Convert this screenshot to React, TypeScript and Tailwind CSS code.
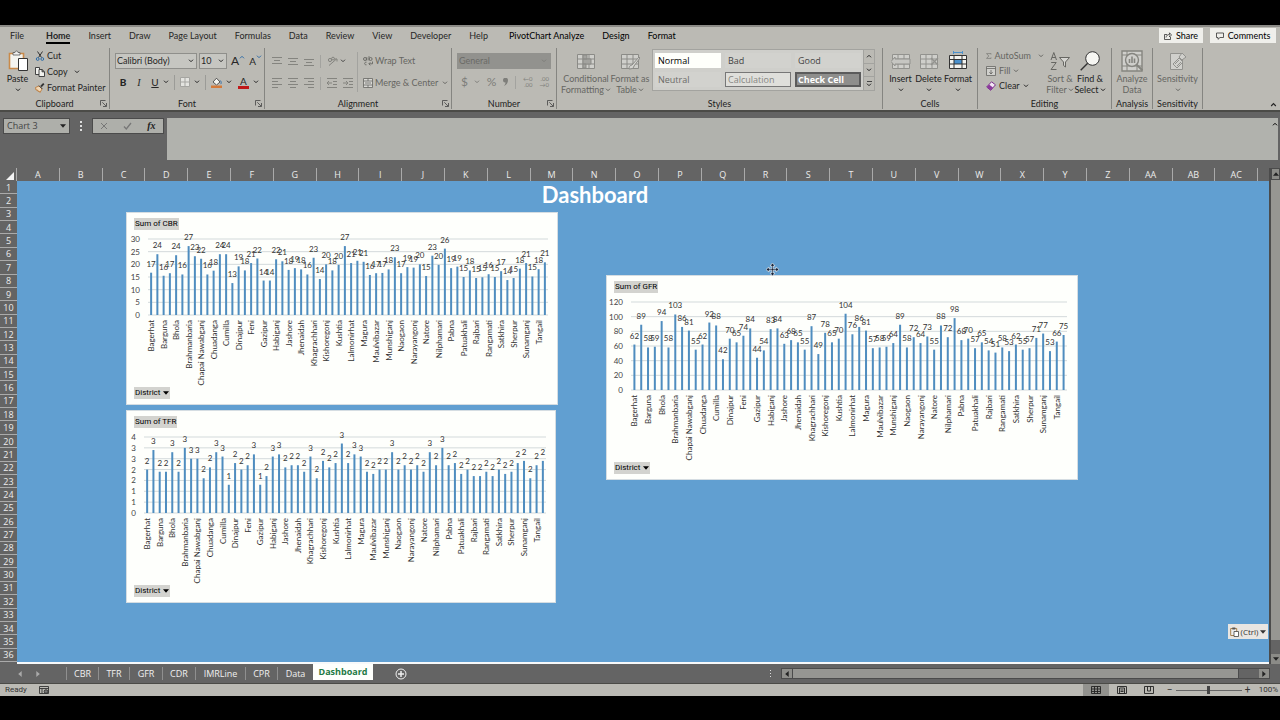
import { ReactNode } from 'react';

const menuTabs = ['Home', 'Insert', 'Draw', 'Page Layout', 'Formulas', 'Data', 'Review', 'View', 'Developer', 'Help'];
const chartTabs = ['PivotChart Analyze', 'Design', 'Format'];

const columns = [
  'A', 'B', 'C', 'D', 'E', 'F', 'G', 'H', 'I', 'J', 'K', 'L', 'M', 'N', 'O', 'P', 'Q', 'R', 'S', 'T',
  'U', 'V', 'W', 'X', 'Y', 'Z', 'AA', 'AB', 'AC',
];
const rows = Array.from({ length: 36 }, (_, i) => i + 1);

const sheets = [
  { name: 'CBR', width: 'w-8' },
  { name: 'TFR', width: 'w-[31px]' },
  { name: 'GFR', width: 'w-[33px]' },
  { name: 'CDR', width: 'w-[33px]' },
  { name: 'IMRLine', width: 'w-[50px]' },
  { name: 'CPR', width: 'w-8' },
  { name: 'Data', width: 'w-9' },
];

// The category axis only has room for every second district
const districts = [
  'Bagerhat', 'Barguna', 'Bhola', 'Brahmanbaria', 'Chapai Nawabganj', 'Chuadanga', 'Cumilla', 'Dinajpur',
  'Feni', 'Gazipur', 'Habiganj', 'Jashore', 'Jhenaidah', 'Khagrachhari', 'Kishoregonj', 'Kushtia',
  'Lalmonirhat', 'Magura', 'Maulvibazar', 'Munshiganj', 'Naogaon', 'Narayangonj', 'Natore', 'Nilphamari',
  'Pabna', 'Patuakhali', 'Rajbari', 'Rangamati', 'Satkhira', 'Sherpur', 'Sunamganj', 'Tangail',
];

const cbr = [
  16.7, 24, 15.5, 16.5, 23.6, 16, 27.2, 23.2, 22.2, 16, 17.5, 24, 24, 12.6, 19.2, 17.6,
  20.5, 22.3, 13.6, 13.6, 22, 21.2, 17.8, 18.5, 18, 16, 22.6, 14.2, 20, 17.6, 19.8, 27.2,
  20.5, 21.4, 21, 15.8, 16.5, 16.6, 18, 22.8, 16.5, 18.9, 18.7, 20, 15.4, 23.4, 19.8, 26.2,
  18.5, 19.1, 15, 17.6, 14.6, 14.9, 16.1, 15, 17.3, 13.8, 14.6, 18.3, 20.5, 15.2, 18.1, 20.8,
];
const tfr = [
  2, 2.9, 1.9, 1.9, 2.8, 1.9, 3, 2.5, 2.5, 1.6, 2.1, 2.8, 2.6, 1.3, 2.3, 2,
  2.2, 2.7, 1.3, 1.7, 2.6, 2.7, 2.1, 2.2, 2.2, 1.9, 2.6, 1.6, 2.4, 2.1, 2.3, 3.2,
  2.3, 2.7, 2.6, 1.9, 1.8, 2, 2, 2.8, 2, 2.2, 2, 2.2, 1.9, 2.8, 2.2, 3,
  2.2, 2.3, 1.8, 2, 1.7, 1.7, 1.9, 1.7, 2, 1.8, 1.9, 2.3, 2.4, 1.6, 2.2, 2.4,
];
const gfr = [
  62, 89, 58, 59, 94, 58, 103, 86, 81, 55, 62, 92, 88, 42, 70, 65,
  74, 84, 44, 54, 83, 84, 63, 68, 65, 55, 87, 49, 78, 65, 70, 104,
  76, 86, 81, 57, 58, 59, 64, 89, 58, 72, 64, 73, 55, 88, 72, 98,
  68, 70, 57, 65, 54, 51, 58, 53, 62, 55, 57, 71, 77, 53, 66, 75,
];

function Chevron({ className = '' }: { className?: string }) {
  return (
    <svg viewBox="0 0 6 4" className={`h-1 w-1.5 shrink-0 ${className}`} fill="none" stroke="currentColor">
      <path d="M1 .7 3 2.7 5 .7" />
    </svg>
  );
}

function Triangle({ className = '' }: { className?: string }) {
  return (
    <svg viewBox="0 0 6 4" className={`h-1 w-1.5 shrink-0 ${className}`} fill="currentColor">
      <path d="M0 .3h6L3 3.8z" />
    </svg>
  );
}

function Launcher() {
  return (
    <button aria-label="More options" className="absolute right-0.5 bottom-0.5 text-[#444]">
      <svg viewBox="0 0 7 7" className="size-[7px]" fill="none" stroke="currentColor" strokeWidth=".8">
        <path d="M.5 5.5v-5h5M2.3 2.3l3.8 3.8M6.5 3v3.5H3" />
      </svg>
    </button>
  );
}

function Group({ label, width, launcher, children }: { label: string; width: string; launcher?: boolean; children: ReactNode }) {
  return (
    <section className={`relative flex shrink-0 flex-col border-r border-[#858581] ${width}`}>
      <div className="flex h-[51px]">{children}</div>
      <div className="text-center text-[9px] leading-[10px] text-[#222]">{label}</div>
      {launcher && <Launcher />}
    </section>
  );
}

function BigButton({ icon, lines, width, disabled, chevron = 'below' }: {
  icon: ReactNode;
  lines: string[];
  width: string;
  disabled?: boolean;
  chevron?: 'below' | 'inline' | 'none';
}) {
  return (
    <button disabled={disabled} className={`flex shrink-0 flex-col items-center text-[9px] leading-[11px] whitespace-nowrap ${width} ${disabled ? 'text-[#666662]' : 'text-[#222]'}`}>
      <span className="flex h-[25px] items-center justify-center">{icon}</span>
      {lines.map((line, i) => (
        <span key={line} className="flex items-center gap-px">
          {line}
          {chevron === 'inline' && i === lines.length - 1 && <Chevron />}
        </span>
      ))}
      {chevron === 'below' && <Chevron className="mt-1" />}
    </button>
  );
}

function Lines({ d, label }: { d: string; label: string }) {
  return (
    <button disabled aria-label={label} className="text-[#84847f]">
      <svg viewBox="0 0 10 10" className="size-[10px]" fill="none" stroke="currentColor"><path d={d} /></svg>
    </button>
  );
}

function GridIcon({ className = 'text-[#8b8b87]', children }: { className?: string; children?: ReactNode }) {
  return (
    <svg viewBox="0 0 20 20" className={`size-5 ${className}`} fill="none" stroke="currentColor">
      <path d="M1.5 3.5h17v14h-17z" fill="#cfcfcb" />
      <path d="M1.5 8h17M1.5 13h17M7 3.5v14M13 3.5v14" />
      {children}
    </svg>
  );
}

function Ribbon() {
  return (
    <header className="shrink-0 border-t-2 border-[#8b8a86] bg-[#bbbab4] font-['Lato',sans-serif] text-[#262626]">
      <nav className="flex h-[21px] items-start pt-px pr-1 pl-[10px] text-[9px]">
        <a href="#" className="mr-[22px] leading-4">File</a>
        <div className="flex gap-[18px]">
          {menuTabs.map((tab) => (
            <a
              key={tab}
              href="#"
              className={`h-4 leading-4 whitespace-nowrap ${tab === 'Home' ? 'border-b-2 border-black font-bold' : ''}`}
            >
              {tab}
            </a>
          ))}
        </div>
        <div className="ml-[21px] flex flex-1 gap-[18px] text-black">
          {chartTabs.map((tab) => (
            <a key={tab} href="#" className="leading-4 whitespace-nowrap">{tab}</a>
          ))}
        </div>
        <div className="flex gap-[7px] text-black">
          <button className="flex h-[15px] w-11 items-center justify-center gap-1 bg-[#efefeb]">
            <svg viewBox="0 0 8 8" className="size-2" fill="none" stroke="#333" strokeWidth=".8">
              <path d="M3 2.5H.5v5h6V5M2 5.5c.3-2 1.5-3 3.5-3V.8l2 2.2-2 2V3.6" />
            </svg>
            Share
          </button>
          <button className="flex h-[15px] w-[66px] items-center justify-center gap-1 bg-[#efefeb]">
            <svg viewBox="0 0 8 8" className="size-2" fill="none" stroke="#333" strokeWidth=".8">
              <path d="M.5 1h7v4.5H4L2 7.3V5.5H.5z" />
            </svg>
            Comments
          </button>
        </div>
      </nav>

      <div className="flex h-[62px] pb-px">
        <Group label="Clipboard" width="w-[110px]" launcher>
          <BigButton
            width="w-[35px]"
            lines={['Paste']}
            icon={
              <svg viewBox="0 0 20 22" className="h-[22px] w-5">
                <path d="M1.5 3.5h14v15h-14z" fill="#f4f4f0" stroke="#c98a4a" strokeWidth="1.6" />
                <path d="M5 5V2.5h2C7 .5 10 .5 10 2.5h2V5z" fill="#eee" stroke="#555" strokeWidth=".8" />
                <path d="M10.5 8.5h9v12h-9z" fill="#fff" stroke="#333" />
              </svg>
            }
          />
          <div className="flex flex-col text-[9px] leading-4">
            <button className="flex h-4 items-center gap-0.5">
              <svg viewBox="0 0 10 10" className="size-[10px]" fill="none">
                <path d="M2.5.5l4 6M7.5.5l-4 6" stroke="#333" />
                <circle cx="2.7" cy="8" r="1.4" stroke="#2f6da8" />
                <circle cx="7.3" cy="8" r="1.4" stroke="#2f6da8" />
              </svg>
              Cut
            </button>
            <button className="flex h-4 items-center gap-0.5">
              <svg viewBox="0 0 10 10" className="size-[10px]" fill="#f2f2ee" stroke="#333" strokeWidth=".9">
                <path d="M.5.5h4v7h-4z" />
                <path d="M4 2.5h3l2.5 2.3v4.7H4zM7 2.5v2.3h2.5" />
              </svg>
              Copy <Chevron className="ml-1" />
            </button>
            <button className="flex h-4 items-center gap-0.5 whitespace-nowrap">
              <svg viewBox="0 0 10 10" className="size-[10px]">
                <path d="M6 3.5 8.8.7" stroke="#333" strokeWidth="1.8" />
                <path d="M.5 4.5 4 3l3 3-2 3.5-1-1.5-1 .5-.4-1.5H1z" fill="#f1d7b5" stroke="#b9722f" strokeWidth=".8" />
                <path d="m4 2.6 3.3 3.3" stroke="#333" />
              </svg>
              Format Painter
            </button>
          </div>
        </Group>

        <Group label="Font" width="w-[155px]" launcher>
          <div className="flex flex-col gap-[5px] pt-[5px] pl-[5px]">
            <div className="flex items-center gap-0.5">
              <span className="relative">
                <select aria-label="Font" className="block h-4 w-[82px] appearance-none border border-[#8f8f8b] bg-[#c6c6c1] pl-px text-[9px]">
                  <option>Calibri (Body)</option>
                </select>
                <Chevron className="absolute top-1.5 right-[3px]" />
              </span>
              <span className="relative">
                <select aria-label="Font size" className="block h-4 w-7 appearance-none border border-[#8f8f8b] bg-[#c6c6c1] pl-px text-[9px]">
                  <option>10</option>
                </select>
                <Chevron className="absolute top-1.5 right-[3px]" />
              </span>
              <button aria-label="Increase font size" className="ml-0.5 flex text-xs leading-4">
                A<Chevron className="mt-0.5 rotate-180 text-[#2f6da8]" />
              </button>
              <button aria-label="Decrease font size" className="ml-0.5 flex text-[10px] leading-4">
                A<Chevron className="mt-0.5 text-[#2f6da8]" />
              </button>
            </div>
            <div className="flex h-4 items-center text-[10px]">
              <button className="w-4 font-black">B</button>
              <button className="w-4 font-['Liberation_Serif',serif] italic">I</button>
              <button className="w-4 underline">U</button>
              <Chevron />
              <span className="mx-[5px] h-[15px] border-l border-[#9b9b97]" />
              <button aria-label="Borders" className="flex items-center gap-1">
                <svg viewBox="0 0 10 10" className="size-[10px]" fill="#e4e4e0" stroke="#a5a5a1"><path d="M.5.5h9v9h-9zM5 .5v9M.5 5h9" /></svg>
                <Chevron />
              </button>
              <span className="mx-[5px] h-[15px] border-l border-[#9b9b97]" />
              <button aria-label="Fill colour" className="flex items-center gap-1">
                <svg viewBox="0 0 11 11" className="size-[11px]">
                  <path d="M2 5 5.5 1.2 9 5 5.5 8z" fill="#f4f4f0" stroke="#333" strokeWidth=".8" />
                  <path d="M9.3 3.5c1 1.2 1.2 2.6.4 3.6" stroke="#2f6da8" fill="none" />
                  <path d="M0 8.5h11V11H0z" fill="#d47a3a" />
                </svg>
                <Chevron />
              </button>
              <button aria-label="Font colour" className="ml-1.5 flex items-center gap-1">
                <span className="w-[11px] border-b-[3px] border-[#c01818] text-center text-[10px] leading-[10px]">A</span>
                <Chevron />
              </button>
            </div>
          </div>
        </Group>

        <Group label="Alignment" width="w-[187px]" launcher>
          <div className="flex flex-col pt-[5px] pl-[7px] text-[#84847f]">
            <div className="flex h-4 items-center gap-1.5">
              <Lines label="Top align" d="M0 1.5h10M2 4.5h6M0 7.5h10" />
              <Lines label="Middle align" d="M0 2.5h10M2 5.5h6M0 8.5h10" />
              <Lines label="Bottom align" d="M0 3.5h10M2 6.5h6M0 9.5h10" />
              <span className="h-[13px] border-l border-[#a3a39f]" />
              <button disabled aria-label="Orientation" className="flex items-center gap-0.5">
                <svg viewBox="0 0 11 10" className="h-[10px] w-[11px]" fill="none" stroke="currentColor">
                  <circle cx="3" cy="4" r="1.6" /><circle cx="6" cy="2.6" r="1.4" /><path d="M2 9.5 9.5 3M7 3h3v2.5" />
                </svg>
                <Chevron className="text-[#444]" />
              </button>
            </div>
            <div className="mt-1.5 flex h-4 items-center gap-1.5">
              <Lines label="Align left" d="M0 .5h10M0 3.5h6M0 6.5h10M0 9.5h6" />
              <Lines label="Center" d="M0 .5h10M2 3.5h6M0 6.5h10M2 9.5h6" />
              <Lines label="Align right" d="M0 .5h10M4 3.5h6M0 6.5h10M4 9.5h6" />
              <span className="h-[13px] border-l border-[#a3a39f]" />
              <Lines label="Decrease indent" d="M0 .5h10M6 3.5h4M6 6.5h4M0 9.5h10M5 5H0M2 3 0 5l2 2" />
              <Lines label="Increase indent" d="M0 .5h10M6 3.5h4M6 6.5h4M0 9.5h10M0 5h5M3 3l2 2-2 2" />
            </div>
          </div>
          <div className="mt-1 ml-1 flex h-10 flex-col justify-between border-l border-[#a3a39f] pl-[5px] text-[9px] text-[#666662]">
            <button disabled className="flex h-[18px] items-center gap-0.5 whitespace-nowrap">
              <svg viewBox="0 0 10 10" className="size-[10px]" fill="none" stroke="currentColor" strokeWidth=".9">
                <circle cx="2" cy="3" r="1.5" /><path d="M3.8 1.2v3.3M6 .2v4.3" /><circle cx="7.6" cy="3" r="1.5" />
                <path d="M3.5 6.2c-2.5-.4-2.5 3 0 2.6M9.5 5.5v2.3H6M7.3 6.3 5.8 7.8l1.5 1.5" />
              </svg>
              Wrap Text
            </button>
            <button disabled className="flex h-[18px] items-center gap-0.5 whitespace-nowrap">
              <svg viewBox="0 0 10 10" className="size-[10px]" fill="#d9d9d5" stroke="currentColor" strokeWidth=".8">
                <path d="M.5.5h9v9h-9zM.5 3h9M.5 7h9M5 .5V3M5 7v2.5M2 5h6" />
              </svg>
              Merge &amp; Center <Chevron className="ml-0.5" />
            </button>
          </div>
        </Group>

        <Group label="Number" width="w-[105px]" launcher>
          <div className="flex flex-1 flex-col gap-[5px] px-[5px] pt-[5px] text-[#7e7e7a]">
            <span className="relative">
              <select disabled aria-label="Number format" className="block h-4 w-full appearance-none bg-[#92928e] pl-0.5 text-[9px] text-[#6b6b67] opacity-100">
                <option>General</option>
              </select>
              <Chevron className="absolute top-1.5 right-1" />
            </span>
            <div className="flex h-4 items-center justify-between pr-0.5 pl-1">
              <button disabled aria-label="Accounting format" className="flex items-center gap-1.5 text-xs leading-4">$<Chevron /></button>
              <button disabled className="text-xs leading-4">%</button>
              <button disabled aria-label="Comma style">
                <svg viewBox="0 0 5 8" className="h-2 w-[5px]" fill="currentColor"><path d="M0 2.2a2.3 2.2 0 0 1 5-.1C5 5 3.5 7.3 1 8c1-1.2 1.5-2.3 1.6-3.5A2.3 2.3 0 0 1 0 2.2" /></svg>
              </button>
              <span className="h-[13px] border-l border-[#a3a39f]" />
              <button disabled className="flex flex-col items-end text-[6px] leading-[6px]"><span>←0</span><span>.00</span></button>
              <button disabled className="flex flex-col items-end text-[6px] leading-[6px]"><span>.00</span><span>→0</span></button>
            </div>
          </div>
        </Group>

        <Group label="Styles" width="w-[326px]">
          <BigButton
            disabled
            width="ml-1.5 w-[46px]"
            chevron="inline"
            lines={['Conditional', 'Formatting']}
            icon={<GridIcon><path d="M7 4h4v4H7zM7 8h8v5H7zM7 13h3v4H7z" fill="#a3a39f" /></GridIcon>}
          />
          <BigButton
            disabled
            width="w-[42px]"
            chevron="inline"
            lines={['Format as', 'Table']}
            icon={<GridIcon><path d="M19 6 12 14c-2 0-3 2-3 4 3 0 5-1 5-3l6-8z" fill="#d5d5d1" /></GridIcon>}
          />
          <div className="mt-px ml-px flex h-[42px] flex-1 border border-[#a3a39f] bg-[#cfcfcb]">
            <div className="grid flex-1 grid-cols-3 grid-rows-2 gap-x-1 gap-y-1 py-[3px] pr-0.5 pl-0.5 text-left font-['Open_Sans',sans-serif] text-[9px] leading-[15px] text-[#444]">
              <button className="bg-[#fefffb] pl-[3px] text-left text-black">Normal</button>
              <button className="bg-[#d2d2ce] pl-[3px] text-left">Bad</button>
              <button className="bg-[#d2d2ce] pl-[3px] text-left">Good</button>
              <button className="bg-[#d2d2ce] pl-[3px] text-left text-[#6b6b67]">Neutral</button>
              <button className="border border-[#777] bg-[#dfdfdb] pl-0.5 text-left leading-[13px] text-[#868682]">Calculation</button>
              <button className="border-2 border-[#5b5b5b] bg-[#8e8e8c] pl-px text-left leading-[11px] font-bold text-white">Check Cell</button>
            </div>
            <div className="flex w-[11px] flex-col divide-y divide-[#a3a39f] border-l border-[#a3a39f] bg-[#bbbab4]">
              <button aria-label="Previous styles" className="flex flex-1 items-center justify-center"><Chevron className="rotate-180" /></button>
              <button aria-label="Next styles" className="flex flex-1 items-center justify-center"><Chevron /></button>
              <button aria-label="All styles" className="flex flex-1 flex-col items-center justify-center gap-px"><span className="w-[5px] border-t border-[#444]" /><Chevron /></button>
            </div>
          </div>
          <div className="w-[7px]" />
        </Group>

        <Group label="Cells" width="w-[95px]">
          <BigButton
            width="ml-1 w-[27px]"
            lines={['Insert']}
            icon={<GridIcon className="text-[#92928e]"><path d="M4 8h15v5H4V15L0 10.5 4 6z" fill="#c6c6c2" /></GridIcon>}
          />
          <BigButton
            width="w-[29px]"
            lines={['Delete']}
            icon={<GridIcon className="text-[#92928e]"><path d="m12 7 7 7m0-7-7 7" strokeWidth="1.4" /></GridIcon>}
          />
          <BigButton
            width="w-[30px]"
            lines={['Format']}
            icon={
              <svg viewBox="0 0 20 20" className="size-5" fill="none">
                <path d="M1.5 4.5h17v13h-17z" fill="#f3f3ef" />
                <path d="M6 8h8v5H6z" fill="#4a90cc" />
                <path d="M1.5 4.5h17v13h-17zM1.5 8.5h17M1.5 13h17M6 4.5v13M14 4.5v13" stroke="#333" />
                <path d="M5 1.5h10M5.5 0v3M14.5 0v3" stroke="#4a90cc" />
              </svg>
            }
          />
        </Group>

        <Group label="Editing" width="w-[134px]">
          <div className="flex w-[66px] flex-col pl-2 text-[9px]">
            <button disabled className="flex h-[15px] items-center gap-[3px] text-[#666662]">
              <svg viewBox="0 0 10 10" className="size-[10px]" fill="none" stroke="currentColor"><path d="M9 2.3V.7H1L5 5 1 9.3h8V7.7" /></svg>
              AutoSum <Chevron className="ml-1" />
            </button>
            <button disabled className="flex h-[15px] items-center gap-[3px] text-[#666662]">
              <svg viewBox="0 0 10 10" className="size-[10px]" fill="#d0d0cc" stroke="currentColor" strokeWidth=".8"><path d="M.5.5h9v9h-9zM.5 2.5h9M5 4v4M3.3 6.3 5 8l1.7-1.7" /></svg>
              Fill <Chevron />
            </button>
            <button className="flex h-[15px] items-center gap-[3px]">
              <svg viewBox="0 0 10 10" className="size-[10px]"><path d="M.7 6 5.5.8l4 3L4.7 9.3z" fill="#f3e8f5" stroke="#7b2f8c" /><path d="M.7 6 3 3.5l4 3-2.3 2.8z" fill="#8b3a9c" /></svg>
              Clear <Chevron />
            </button>
          </div>
          <BigButton
            disabled
            width="w-8"
            chevron="inline"
            lines={['Sort &', 'Filter']}
            icon={
              <svg viewBox="0 0 20 20" className="size-5" fill="none" stroke="currentColor">
                <path d="M1 9 3.8 1.5 6.5 9M2 6.5h3.6M1.2 11.5h5L1 18.5h5.5" />
                <path d="M9.5 6.5h10l-4 4.5v5l-2-1.5V11z" fill="#d5d5d1" />
              </svg>
            }
          />
          <BigButton
            width="w-7"
            chevron="inline"
            lines={['Find &', 'Select']}
            icon={
              <svg viewBox="0 0 20 20" className="size-5" fill="#f6f6f2" stroke="#333">
                <circle cx="12.5" cy="7.5" r="6.8" /><path d="M7.7 12.3.7 19.3" strokeWidth="1.4" />
              </svg>
            }
          />
        </Group>

        <Group label="Analysis" width="w-[41px]">
          <BigButton
            disabled
            width="w-full"
            chevron="none"
            lines={['Analyze', 'Data']}
            icon={
              <svg viewBox="0 0 22 22" className="size-[22px]" fill="none" stroke="#85857f">
                <path d="M1 1h20v20H1z" fill="#cfcfcb" strokeWidth="1.4" />
                <path d="M1 5h20M1 16h20M6 1v20M16 16v5" />
                <circle cx="11" cy="10" r="6.5" fill="#cfcfcb" strokeWidth="1.4" />
                <path d="m15.5 14.5 6 6" strokeWidth="2" />
                <path d="M8.5 13V9M11 13V6.5M13.5 13V8.5" strokeWidth="1.6" />
              </svg>
            }
          />
        </Group>

        <Group label="Sensitivity" width="w-[50px]">
          <BigButton
            disabled
            width="w-full"
            lines={['Sensitivity']}
            icon={
              <svg viewBox="0 0 20 20" className="size-5" fill="#d0d0cc" stroke="#92928e">
                <path d="M2.5 2.5h12v16h-12z" /><path d="m5 13 6-6 4 4-6 6z" /><path d="m11 6 3-4 4 4-4 3z" /><path d="m7 13 4-4m-2 6 4-4" />
              </svg>
            }
          />
        </Group>
        <button aria-label="Collapse ribbon" className="mt-auto mr-[3px] mb-0.5 ml-auto"><Chevron className="h-[5px] w-[7px] rotate-180" /></button>
      </div>
    </header>
  );
}

function FormulaBar() {
  return (
    <div className="flex shrink-0 items-start border-t-2 border-[#4b4b47] bg-[#646464] pt-1.5 pr-0.5 pb-2 pl-[3px]">
      <div className="flex h-4 w-[67px] items-center border border-[#4b4b4b] bg-[#aeafaa] pr-[3px]">
        <input aria-label="Name box" defaultValue="Chart 3" className="w-0 flex-1 pl-[3px] text-[9px] text-[#444] outline-none" />
        <button aria-label="Name list" className="flex text-[#222]"><Triangle /></button>
      </div>
      <span className="flex h-4 w-[22px] flex-col items-center justify-center gap-0.5">
        <i className="size-0.5 bg-[#ddd]" /><i className="size-0.5 bg-[#ddd]" /><i className="size-0.5 bg-[#ddd]" />
      </span>
      <div className="flex h-4 w-[72px] items-center justify-around border border-[#4b4b4b] bg-[#aeafaa] text-[#777]">
        <button aria-label="Cancel">
          <svg viewBox="0 0 8 8" className="size-2" fill="none" stroke="currentColor"><path d="m1 1 6 6m0-6L1 7" /></svg>
        </button>
        <button aria-label="Enter">
          <svg viewBox="0 0 9 8" className="h-2 w-[9px]" fill="none" stroke="currentColor" strokeWidth="1.3"><path d="m1 4.5 2.3 2.5L8 1" /></svg>
        </button>
        <button className="font-['Liberation_Serif',serif] text-[10px] leading-[14px] font-bold text-[#222] italic">fx</button>
      </div>
      <div className="ml-[3px] flex h-[42px] flex-1 items-start bg-[#b1b2ad]">
        <textarea aria-label="Formula bar" className="h-full flex-1 resize-none px-1 text-[9px] outline-none" />
        <button aria-label="Collapse formula bar" className="pt-1"><Chevron className="rotate-180" /></button>
      </div>
    </div>
  );
}

interface PivotChartProps {
  field: string;
  values: number[];
  ticks: number[];
  max: number;
  plot: { left: number; right: number; bottom: number };
  className: string;
}

const PLOT_TOP = 9;

function PivotChart({ field, values, ticks, max, plot, className }: PivotChartProps) {
  const step = (plot.right - plot.left) / values.length;
  const toY = (value: number) => plot.bottom - (value / max) * (plot.bottom - PLOT_TOP);
  const toX = (index: number) => plot.left + step * (index + 0.5);

  return (
    <figure className={`absolute flex flex-col items-start border border-[#d5dde2] bg-[#fefffc] py-[5px] font-['Roboto',sans-serif] ${className}`}>
      <button className="ml-[7px] h-3 bg-[#d3d3cf] px-px text-[8px] leading-3 text-black">Sum of {field}</button>
      <svg className="w-full flex-1 overflow-visible font-['Lato',sans-serif]" role="img" aria-label={`Sum of ${field} by district`}>
        {ticks.map((tick) => (
          <g key={tick}>
            <line x1={plot.left} x2={plot.right} y1={toY(tick)} y2={toY(tick)} stroke="#d3dadb" />
            <text x={plot.left - 8} y={toY(tick) + 3} textAnchor="end" fontSize="8" fill="#444">{Math.round(tick)}</text>
          </g>
        ))}
        {values.map((value, i) => (
          <rect key={i} x={toX(i) - 1} y={toY(value)} width="2" height={plot.bottom - toY(value)} fill="#4f8dbf" />
        ))}
        {values.map((value, i) => (
          <text key={i} x={toX(i)} y={toY(value) - 6} textAnchor="middle" fontSize="8" fill="#333">
            {Math.round(value)}
          </text>
        ))}
        {districts.map((name, i) => (
          <text
            key={name}
            transform={`translate(${toX(i * 2) + 3} ${plot.bottom + 5}) rotate(-90)`}
            textAnchor="end"
            fontSize="8"
            fill="#333"
          >
            {name}
          </text>
        ))}
      </svg>
      <button className="ml-[7px] flex h-3 items-center gap-[3px] bg-[#d3d3cf] px-px text-[8px] leading-3 text-black">
        District <Triangle />
      </button>
    </figure>
  );
}

function Worksheet() {
  return (
    <main className="flex min-h-0 flex-1">
      <div className="flex min-w-0 flex-1 flex-col">
        <div className="flex h-[13px] shrink-0 bg-[#646464] text-[9px] leading-[13px] text-[#ececec]">
          <button aria-label="Select all" className="flex w-[17px] justify-end border-r border-[#aaa] pr-0.5">
            <svg viewBox="0 0 8 8" className="mt-1 size-2" fill="#f4f4f4"><path d="M8 0v8H0z" /></svg>
          </button>
          {columns.map((column) => (
            <div key={column} className="flex-1 border-r border-[#aaa] text-center">{column}</div>
          ))}
          <div className="w-[11px]" />
        </div>
        <div className="flex min-h-0 flex-1">
          <div className="flex w-[17px] shrink-0 flex-col bg-[#646464] pb-0.5 text-[9px] text-[#ececec]">
            {rows.map((row) => (
              <div key={row} className="flex min-h-0 flex-1 items-center justify-center border-b border-[#aaa] leading-none">{row}</div>
            ))}
          </div>
          <div className="relative flex-1 border-b-2 border-[#f7f9fa] bg-[#619fd1]">
            <h1 className="mr-24 pt-px text-center font-['Lato',sans-serif] text-[22px] leading-[26px] font-bold text-white">Dashboard</h1>
            <PivotChart
              field="CBR"
              values={cbr}
              max={30}
              ticks={[0, 5, 10, 15, 20, 25, 30]}
              plot={{ left: 21, right: 421, bottom: 85 }}
              className="top-[31px] left-[109px] h-[193px] w-[432px]"
            />
            <PivotChart
              field="TFR"
              values={tfr}
              max={3.5}
              ticks={[0, 0.5, 1, 1.5, 2, 2.5, 3, 3.5]}
              plot={{ left: 17, right: 419, bottom: 85 }}
              className="top-[229px] left-[109px] h-[193px] w-[430px]"
            />
            <PivotChart
              field="GFR"
              values={gfr}
              max={120}
              ticks={[0, 20, 40, 60, 80, 100, 120]}
              plot={{ left: 24, right: 460, bottom: 97 }}
              className="top-[94px] left-[589px] h-[205px] w-[472px]"
            />
            {/* move cursor */}
            <svg viewBox="0 0 13 13" className="absolute top-[82px] left-[749px] size-[13px]" stroke="#fff" strokeWidth=".6" fill="#16233a">
              <path d="M6.5 0 9 3H7.2v2.8H10V4l3 2.5L10 9V7.2H7.2V10H9l-2.5 3L4 10h1.8V7.2H3V9L0 6.5 3 4v1.8h2.8V3H4z" />
            </svg>
            <button className="absolute right-px bottom-[23px] flex h-[15px] w-10 items-center justify-center gap-0.5 bg-[#e9e6e2] text-[8px] text-[#333]">
              <svg viewBox="0 0 9 10" className="h-[10px] w-[9px]">
                <path d="M.7 1.5h6v7h-6z" fill="#eee" stroke="#a8814d" /><path d="M2.3.5h3v2h-3z" fill="#555" /><path d="M4 4.5h4.5v5H4z" fill="#fff" stroke="#444" strokeWidth=".8" />
              </svg>
              (Ctrl) <Triangle />
            </button>
          </div>
        </div>
      </div>
      <div className="flex w-[11px] shrink-0 flex-col border-l-2 border-[#4b4b4b] bg-[#646464] text-[#222]">
        <button aria-label="Scroll up" className="flex h-3 items-center justify-center border border-[#4b4b4b] bg-[#8b8b87]"><Triangle className="rotate-180" /></button>
        <div className="flex-1 bg-[#969692]" />
        <div className="h-[14px]" />
        <button aria-label="Scroll down" className="flex h-[10px] items-center justify-center bg-[#8b8b87]"><Triangle /></button>
      </div>
    </main>
  );
}

function SheetTabs() {
  return (
    <nav className="flex h-[19px] shrink-0 items-center bg-[#646464] pr-2.5 text-[9px] text-[#f0f0f0]">
      <div className="flex w-[66px] gap-3 pl-[17px] text-[#aaa]">
        <button aria-label="Previous sheet"><Triangle className="rotate-90" /></button>
        <button aria-label="Next sheet"><Triangle className="-rotate-90" /></button>
      </div>
      {sheets.map(({ name, width }) => (
        <button key={name} className={`h-[13px] border-l border-[#8f8f8f] leading-[13px] ${width}`}>{name}</button>
      ))}
      <button className="h-4 w-[60px] self-start bg-[#fefffc] leading-4 font-bold text-[#1f7a45]">Dashboard</button>
      <button aria-label="New sheet" className="ml-[22px]">
        <svg viewBox="0 0 12 12" className="size-3" fill="none" stroke="#f0f0f0"><circle cx="6" cy="6" r="5" /><path d="M6 3v6M3 6h6" strokeWidth="1.5" /></svg>
      </button>
      <span className="mr-[10px] ml-auto flex flex-col gap-0.5">
        <i className="size-px bg-[#ddd]" /><i className="size-px bg-[#ddd]" /><i className="size-px bg-[#ddd]" />
      </span>
      <div className="flex h-[11px] w-[489px] border border-[#4b4b4b] bg-[#646464] text-[#222]">
        <button aria-label="Scroll left" className="flex w-[10px] items-center justify-center bg-[#8f8f8b]"><Triangle className="rotate-90" /></button>
        <div className="flex-1 border-x border-[#4b4b4b] bg-[#969692]" />
        <div className="w-5" />
        <button aria-label="Scroll right" className="flex w-[10px] items-center justify-center bg-[#8f8f8b]"><Triangle className="-rotate-90" /></button>
      </div>
    </nav>
  );
}

function StatusBar() {
  return (
    <footer className="flex h-[13px] shrink-0 items-center border-t border-[#4b4b47] bg-[#bbbab4] pr-0.5 pl-[5px] font-['Roboto',sans-serif] text-[8px] text-[#333]">
      Ready
      <button aria-label="Macro recording" className="ml-3">
        <svg viewBox="0 0 10 8" className="h-2 w-[10px]" fill="none" stroke="#333" strokeWidth=".9"><path d="M.5.5h9v7h-9zM.5 2.5h9M3 2.5v5" /><circle cx="7" cy="5.5" r="1.8" fill="#777" /></svg>
      </button>
      <div className="ml-auto flex h-full items-center">
        <button aria-label="Normal view" className="flex h-full w-[26px] items-center justify-center bg-[#92928e]">
          <svg viewBox="0 0 10 8" className="h-2 w-[10px]" fill="none" stroke="#222" strokeWidth=".9"><path d="M.5.5h9v7h-9zM.5 3h9M.5 5.5h9M3.5.5v7M6.5.5v7" /></svg>
        </button>
        <button aria-label="Page layout view" className="flex w-[27px] justify-center">
          <svg viewBox="0 0 10 8" className="h-2 w-[10px]" fill="none" stroke="#222" strokeWidth=".9"><path d="M.5.5h9v7h-9zM2.5 2h5v5.5h-5zM3.5 4h3M3.5 5.5h3" /></svg>
        </button>
        <button aria-label="Page break preview" className="flex w-[27px] justify-center">
          <svg viewBox="0 0 10 8" className="h-2 w-[10px]" fill="none" stroke="#222" strokeWidth=".9"><path d="M.5.5h9v7h-9zM3.5.5V5h3V.5" /></svg>
        </button>
        <button className="ml-px w-3 text-[10px] leading-3">−</button>
        <div className="flex h-full w-[66px] items-center">
          <input
            type="range"
            aria-label="Zoom"
            min={10}
            max={190}
            defaultValue={100}
            className="h-px w-full appearance-none bg-[#666] [&::-webkit-slider-thumb]:h-2 [&::-webkit-slider-thumb]:w-[3px] [&::-webkit-slider-thumb]:appearance-none [&::-webkit-slider-thumb]:bg-[#444]"
          />
        </div>
        <button className="w-3 text-[10px] leading-3">+</button>
        <span className="ml-[5px]">100%</span>
      </div>
    </footer>
  );
}

export default function App() {
  return (
    <div className="flex h-screen flex-col overflow-hidden bg-black pt-[25px] pb-6 font-['Open_Sans','Noto_Sans',sans-serif]">
      <Ribbon />
      <FormulaBar />
      <Worksheet />
      <SheetTabs />
      <StatusBar />
    </div>
  );
}
